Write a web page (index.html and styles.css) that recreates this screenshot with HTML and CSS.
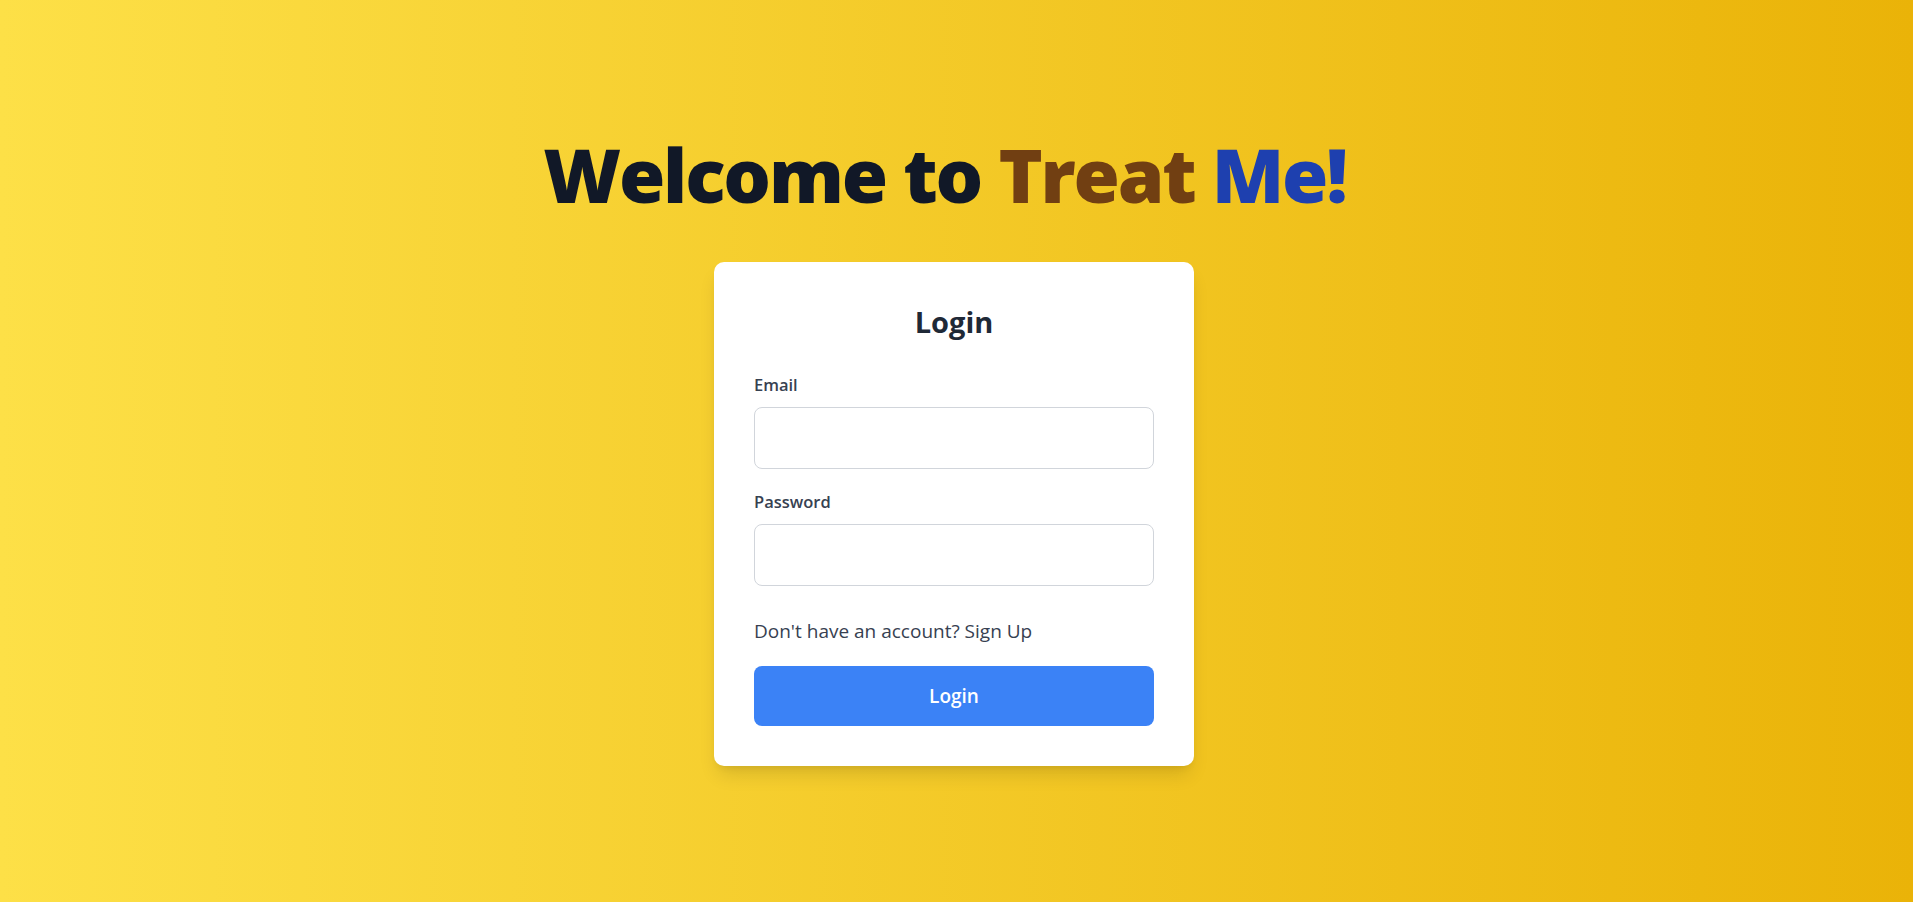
FILE: index.html
```html
<!DOCTYPE html>
<html lang="en">
<head>
<meta charset="utf-8">
<title>Treat Me - Login</title>
<link rel="stylesheet" href="styles.css">
</head>
<body>
<main class="page">
  <h1 class="headline">Welcome to <span class="brand-treat">Treat</span> <span class="brand-me">Me!</span></h1>
  <form class="card">
    <h2 class="card-title">Login</h2>
    <div class="field">
      <label class="field-label" for="email">Email</label>
      <input class="field-input" id="email" type="email">
    </div>
    <div class="field field-last">
      <label class="field-label" for="password">Password</label>
      <input class="field-input" id="password" type="password">
    </div>
    <p class="signup">Don't have an account? Sign Up</p>
    <button class="btn" type="button">Login</button>
  </form>
</main>
</body>
</html>
```
FILE: styles.css
```css
* { box-sizing: border-box; }
html, body { margin: 0; padding: 0; }
body {
  font-family: "Open Sans", "Noto Sans", sans-serif;
  background: linear-gradient(to right, #fde047, #eab308);
  min-height: 100vh;
}
.page {
  min-height: 100vh;
  padding-right: 5px;
  display: flex;
  flex-direction: column;
  align-items: center;
  justify-content: center;
}
.headline {
  margin: 0 19px 50px 0;
  font-size: 75px;
  line-height: 75px;
  font-weight: 800;
  color: #111827;
  letter-spacing: -2.2px;
}
.brand-treat { color: #713f12; }
.brand-me { color: #1e40af; }
.card {
  width: 480px;
  background: #fff;
  border-radius: 10px;
  padding: 40px;
  box-shadow: 0 12px 19px -4px rgba(0,0,0,0.12), 0 5px 8px -5px rgba(0,0,0,0.1);
  display: flex;
  flex-direction: column;
}
.card-title {
  margin: 0 0 30px;
  text-align: center;
  font-size: 29px;
  line-height: 40px;
  font-weight: 700;
  color: #1f2937;
}
.field { display: flex; flex-direction: column; margin-bottom: 20px; }
.field-last { margin-bottom: 30px; }
.field-label {
  font-size: 16.5px;
  line-height: 25px;
  font-weight: 600;
  color: #374151;
  margin-bottom: 10px;
}
.field-input {
  height: 62px;
  border: 1px solid #d1d5db;
  border-radius: 8px;
  font: inherit;
  padding: 0 15px;
  background: #fff;
}
.signup {
  margin: 0 0 20px;
  font-size: 19px;
  line-height: 30px;
  color: #374151;
}
.btn {
  height: 60px;
  border: none;
  border-radius: 8px;
  background: #3b82f6;
  color: #fff;
  font-family: inherit;
  font-size: 19px;
  font-weight: 600;
}
```
